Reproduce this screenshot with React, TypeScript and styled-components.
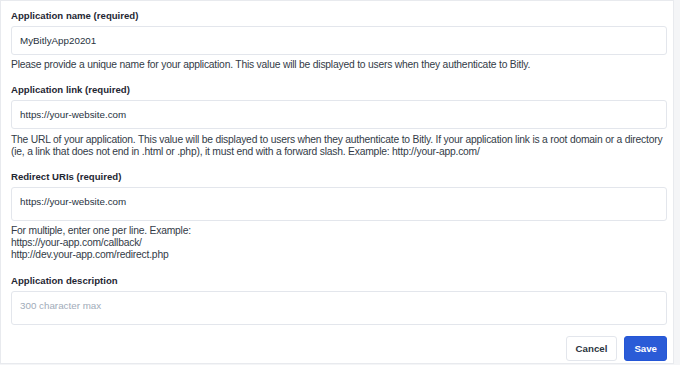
import React from 'react';
import styled, { createGlobalStyle } from 'styled-components';

const GlobalStyle = createGlobalStyle`
  html, body {
    margin: 0;
    padding: 0;
    background: #f4f5f7;
  }
  body {
    font-family: "Liberation Sans", Arial, sans-serif;
    color: #273240;
  }
`;

const Panel = styled.form`
  box-sizing: border-box;
  width: 674px;
  height: 364px;
  background: #ffffff;
  border: 1px solid #e8eaee;
  padding: 9px 6px 0 10px;
  display: flex;
  flex-direction: column;
`;

const Field = styled.div<{ $gap?: number }>`
  display: flex;
  flex-direction: column;
  margin-bottom: ${(p) => p.$gap ?? 0}px;
`;

const Label = styled.label`
  font-size: 9.6px;
  font-weight: 700;
  color: #1f2733;
  line-height: 12px;
  margin-bottom: 4px;
`;

const TextInput = styled.input`
  box-sizing: border-box;
  width: 100%;
  height: 29px;
  border: 1px solid #e3e6ec;
  border-radius: 3px;
  padding: 0 8px;
  font-family: inherit;
  font-size: 9.8px;
  color: #273240;
  outline: none;
`;

const TextArea = styled.textarea<{ $height: number }>`
  box-sizing: border-box;
  width: 100%;
  height: ${(p) => p.$height}px;
  border: 1px solid #e3e6ec;
  border-radius: 3px;
  padding: 8px 8px;
  font-family: inherit;
  font-size: 9.8px;
  line-height: 12px;
  color: #273240;
  resize: none;
  outline: none;

  &::placeholder {
    color: #a1abb9;
  }
`;

const Help = styled.p<{ $top?: number }>`
  margin: ${(p) => p.$top ?? 4}px 0 0;
  font-size: 10.3px;
  letter-spacing: -0.2px;
  line-height: 12px;
  color: #333b47;
`;

const Actions = styled.div`
  display: flex;
  justify-content: flex-end;
  gap: 7px;
  margin-top: 11px;
`;

const Button = styled.button<{ $primary?: boolean }>`
  box-sizing: border-box;
  height: 25px;
  padding: 0 9px;
  border-radius: 3px;
  font-family: inherit;
  font-size: 9.7px;
  font-weight: 700;
  cursor: pointer;
  border: 1px solid ${(p) => (p.$primary ? '#2456d6' : '#e3e6ec')};
  background: ${(p) => (p.$primary ? '#2a5bd7' : '#ffffff')};
  color: ${(p) => (p.$primary ? '#ffffff' : '#2b3440')};
`;

const App: React.FC = () => (
  <>
    <GlobalStyle />
    <Panel onSubmit={(e) => e.preventDefault()}>
      <Field $gap={13}>
        <Label>Application name (required)</Label>
        <TextInput defaultValue="MyBitlyApp20201" />
        <Help>
          Please provide a unique name for your application. This value will be displayed to users when they
          authenticate to Bitly.
        </Help>
      </Field>
      <Field $gap={13}>
        <Label>Application link (required)</Label>
        <TextInput defaultValue="https://your-website.com" />
        <Help $top={5}>
          The URL of your application. This value will be displayed to users when they authenticate to Bitly. If your
          application link is a root domain or a directory (ie, a link that does not end in .html or .php), it must end
          with a forward slash. Example: http://your-app.com/
        </Help>
      </Field>
      <Field $gap={14}>
        <Label>Redirect URIs (required)</Label>
        <TextArea $height={34} defaultValue="https://your-website.com" />
        <Help>
          For multiple, enter one per line. Example:
          <br />
          https://your-app.com/callback/
          <br />
          http://dev.your-app.com/redirect.php
        </Help>
      </Field>
      <Field>
        <Label>Application description</Label>
        <TextArea $height={34} placeholder="300 character max" />
      </Field>
      <Actions>
        <Button type="button">Cancel</Button>
        <Button type="submit" $primary>
          Save
        </Button>
      </Actions>
    </Panel>
  </>
);

export default App;
